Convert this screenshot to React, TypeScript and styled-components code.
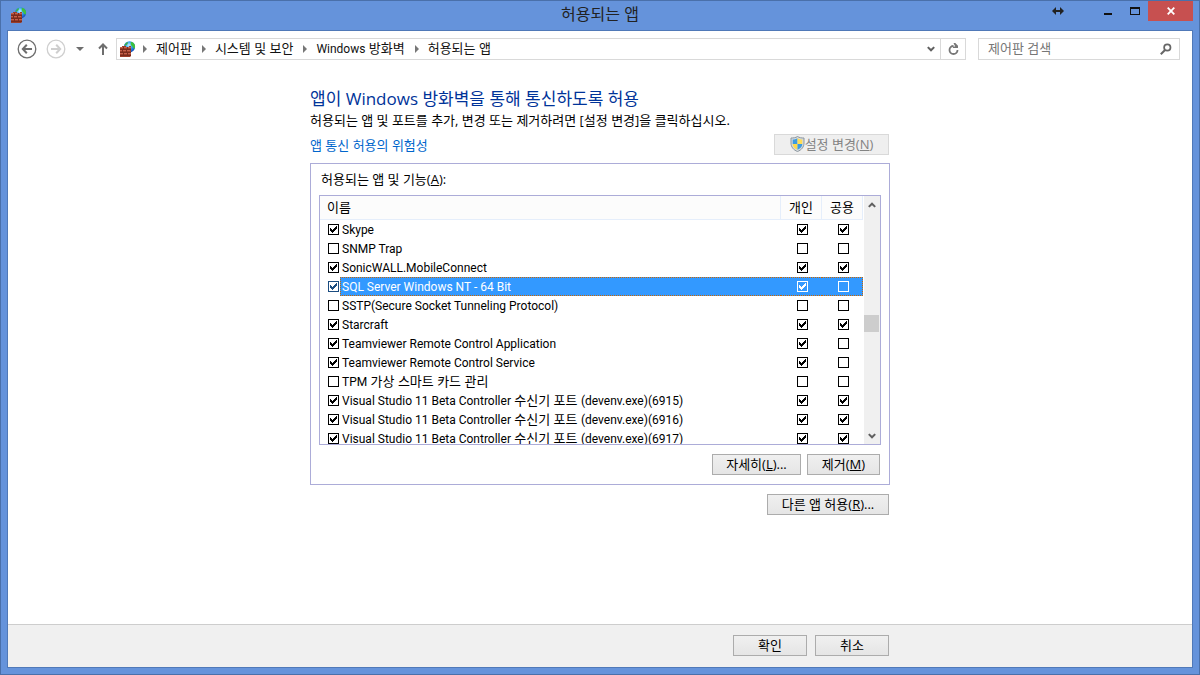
import React from "react";
import styled, { createGlobalStyle, css } from "styled-components";

const GlobalStyle = createGlobalStyle`
  *, *::before, *::after { box-sizing: border-box; }
  body {
    margin: 0;
    font-family: "Open Sans", "Noto Sans CJK KR", sans-serif;
    font-size: 13px;
    line-height: 18px;
    color: #000;
  }
  button, input { font: inherit; color: inherit; }
  svg { display: block; flex: none; }
`;

const Window = styled.div`
  display: flex;
  flex-direction: column;
  min-height: 100vh;
  padding: 0 6px 6px;
  background: #6593db;
  border: 1px solid #4a70aa;
`;

const TitleBar = styled.header`
  display: grid;
  grid-template-columns: 1fr auto 1fr;
  height: 29px;
`;

const TitleIcon = styled.div`
  padding: 6px 0 0 4px;
`;

const Title = styled.h1`
  margin: 0;
  font-size: 16px;
  line-height: 26px;
  font-weight: 400;
  color: #222;
`;

const Controls = styled.div`
  display: flex;
  justify-content: flex-end;
  align-items: flex-start;
`;

const ControlButton = styled.button<{ $wide?: boolean; $close?: boolean }>`
  display: flex;
  align-items: center;
  justify-content: center;
  width: ${(p) => (p.$close ? 45 : 27)}px;
  height: 20px;
  margin-right: ${(p) => (p.$wide ? 23 : 0)}px;
  padding: 0;
  border: 0;
  background: ${(p) => (p.$close ? "#c75050" : "transparent")};
`;

const Client = styled.div`
  flex: 1;
  display: flex;
  flex-direction: column;
  background: #fff;
  border: 1px solid #5079b8;
`;

const Toolbar = styled.nav`
  display: flex;
  align-items: center;
  padding: 7px 12px 0 9px;
`;

const NavButton = styled.button<{ $gap: number }>`
  display: flex;
  padding: 0;
  margin-right: ${(p) => p.$gap}px;
  border: 0;
  background: transparent;
`;

const AddressBar = styled.div`
  flex: 1;
  display: flex;
  align-items: stretch;
  height: 22px;
  margin-right: 12px;
  border: 1px solid #d9d9d9;
`;

const Crumbs = styled.ol`
  flex: 1;
  display: flex;
  align-items: center;
  margin: 0;
  padding: 0 0 0 3px;
  list-style: none;
`;

const Crumb = styled.li<{ $first: boolean }>`
  display: flex;
  align-items: center;
  svg { margin: 0 9px 0 ${(p) => (p.$first ? 7 : 10)}px; }
`;

const CrumbLink = styled.a`
  padding-bottom: 2px;
  color: #111;
  text-decoration: none;
`;

const BarButton = styled.button<{ $divided?: boolean }>`
  display: flex;
  align-items: center;
  justify-content: center;
  width: ${(p) => (p.$divided ? 25 : 18)}px;
  padding: 0;
  border: 0;
  border-left: ${(p) => (p.$divided ? "1px solid #d9d9d9" : "0")};
  background: transparent;
`;

const Search = styled.form`
  display: flex;
  align-items: center;
  width: 202px;
  height: 22px;
  padding: 0 7px 0 9px;
  border: 1px solid #d9d9d9;
`;

const SearchInput = styled.input`
  flex: 1;
  min-width: 0;
  height: 20px;
  padding: 0 0 2px;
  border: 0;
  outline: 0;
  background: transparent;
  &::placeholder { color: #767676; opacity: 1; }
`;

const Main = styled.main`
  flex: 1;
  width: 100%;
  max-width: 580px;
  margin: 0 auto;
  padding: 28px 0 24px;
`;

const Heading = styled.h2`
  margin: 0;
  font-size: 17px;
  line-height: 22px;
  font-weight: 400;
  color: #003399;
`;

const Description = styled.p`
  margin: 0 0 4px;
  line-height: 20px;
`;

const LinkRow = styled.div`
  display: flex;
  justify-content: space-between;
  align-items: center;
  padding-right: 1px;
  margin-bottom: 8px;
`;

const RiskLink = styled.a`
  color: #0066cc;
  text-decoration: none;
`;

const PushButton = styled.button<{ $width: number }>`
  display: flex;
  align-items: center;
  justify-content: center;
  width: ${(p) => p.$width}px;
  height: 21px;
  padding: 0 0 2px;
  border: 1px solid #acacac;
  background: linear-gradient(#f0f0f0, #e5e5e5);
  white-space: pre;
  &:disabled {
    border-color: #d9d9d9;
    background: #efefef;
    color: #838383;
  }
`;

const Group = styled.section`
  padding: 0 8px 9px;
  border: 1px solid #acacd8;
`;

const GroupLabel = styled.h3`
  margin: 0;
  padding: 6px 2px 7px;
  font-size: 13px;
  line-height: 18px;
  font-weight: 400;
`;

const ListBox = styled.div`
  display: flex;
  height: 250px;
  overflow: hidden;
  border: 1px solid #acacd8;
`;

const AppTable = styled.table`
  flex: 1;
  align-self: flex-start;
  table-layout: fixed;
  border-collapse: separate;
  border-spacing: 0;
`;

const HeadCell = styled.th<{ $center?: boolean }>`
  width: ${(p) => (p.$center ? "41px" : "auto")};
  height: 24px;
  padding: ${(p) => (p.$center ? "0 0 2px" : "0 0 2px 7px")};
  text-align: ${(p) => (p.$center ? "center" : "left")};
  font-weight: 400;
  background: #fcfcfc;
  border-right: 1px solid #e5eefb;
  border-bottom: 1px solid #e5eefb;
`;

const rowDots = "linear-gradient(90deg, #cc6600 50%, #3399ff 50%)";
const sideDots = "linear-gradient(#cc6600 50%, #3399ff 50%)";

const selection = (side?: "left" | "right") => css`
  background:
    ${side ? `${sideDots} ${side} top / 1px 2px repeat-y,` : ""}
    ${rowDots} left top / 2px 1px repeat-x,
    ${rowDots} left bottom / 2px 1px repeat-x,
    #3399ff;
`;

const NameCell = styled.td`
  padding: 0 0 0 8px;
`;

const NameRow = styled.div`
  display: flex;
  align-items: center;
  height: 19px;
`;

const NameText = styled.label<{ $selected?: boolean }>`
  flex: 1;
  height: 19px;
  margin-left: 1px;
  padding-left: 2px;
  line-height: 19px;
  white-space: nowrap;
  color: ${(p) => (p.$selected ? "#fff" : "#000")};
  ${(p) => p.$selected && selection("left")}
`;

const CheckCell = styled.td<{ $selected?: boolean; $last?: boolean }>`
  height: 19px;
  padding: 0 0 0 16px;
  ${(p) => p.$selected && selection(p.$last ? "right" : undefined)}
`;

const Latin = styled.span`
  font-family: Roboto, sans-serif;
  font-size: 12px;
`;

const CheckWrap = styled.span<{ $tone: string; $fill: string }>`
  position: relative;
  display: block;
  width: 11px;
  height: 11px;
  color: ${(p) => p.$tone};
  background: ${(p) => p.$fill};
  svg {
    position: absolute;
    inset: 0;
    pointer-events: none;
  }
`;

const CheckInput = styled.input`
  appearance: none;
  display: block;
  width: 11px;
  height: 11px;
  margin: 0;
  border: 1px solid currentColor;
`;

const ScrollBar = styled.div`
  display: flex;
  flex-direction: column;
  align-items: center;
  width: 17px;
  background: #f0f0f0;
  border-left: 1px solid #fff;
`;

const ScrollButton = styled.button`
  display: flex;
  align-items: center;
  justify-content: center;
  width: 16px;
  height: 17px;
  padding: 0;
  border: 0;
  background: transparent;
`;

const ScrollTrack = styled.div`
  flex: 1;
  align-self: stretch;
  padding: 102px 1px 0 0;
`;

const ScrollThumb = styled.div`
  height: 17px;
  background: #cdcdcd;
`;

const ButtonRow = styled.div<{ $top: number; $gap: number }>`
  display: flex;
  justify-content: flex-end;
  gap: ${(p) => p.$gap}px;
  margin-top: ${(p) => p.$top}px;
  padding-right: 1px;
`;

const Footer = styled.footer`
  background: #f0f0f0;
  border-top: 1px solid #cdcdcd;
`;

const FooterInner = styled.div`
  max-width: 580px;
  margin: 0 auto;
  padding: 10px 0 11px;
`;

function FirewallIcon({ id }: { id: string }) {
  return (
    <svg width="16" height="16" viewBox="0 0 16 16" aria-hidden="true">
      <defs>
        <radialGradient id={id} cx="45%" cy="35%" r="70%">
          <stop offset="0" stopColor="#c4f2ff" />
          <stop offset="0.4" stopColor="#3aa6f0" />
          <stop offset="1" stopColor="#0b3fb0" />
        </radialGradient>
      </defs>
      <circle cx="9.500" cy="5.800" r="5.600" fill={`url(#${id})`} />
      <path d="M10.500.8c2 0 3.800 1.400 4.300 3.200.4 1.200.3 2.400-.1 3.400-1.100.2-1.600-.7-2-1.700-.5-.9-1.700-1-1.900-2.200-.1-1 .4-1.700-.3-2.700Z" fill="#3fc23a" />
      <path d="M4.300 4.500c.5-1.700 1.700-3 3.500-3.600.5 1.100-.4 2.300-1.300 3.100-.6.600-1.400.8-2.200.5Z" fill="#3fae48" />
      <path d="M0 6h2V5h4v1h3V5h2v10l-1 1H0Z" fill="#9c3d29" />
      <path d="M0 6.500h3M4 6.500h3M8 6.500h3M0 9.500h2M3 9.500h3M7 9.500h3M0 12.500h3M4 12.500h3M8 12.500h3" stroke="#c4604a" />
      <path d="M0 8.500h11M0 11.500h11M0 14.500h11M3.500 6v2M7.500 6v2M2.500 9v2M6.500 9v2M3.500 12v2M7.500 12v2" stroke="#6a2417" strokeWidth=".7" />
    </svg>
  );
}

function CircleArrow({ color, flip }: { color: string; flip?: boolean }) {
  return (
    <svg width="20" height="20" viewBox="0 0 20 20" fill="none" stroke={color} aria-hidden="true">
      <circle cx="10" cy="10" r="8.800" strokeWidth="1.300" />
      <g transform={flip ? "matrix(-1 0 0 1 20 0)" : undefined} strokeWidth="2">
        <path d="M6 10h9" />
        <path d="M9.800 5.800 5.800 10l4 4.200" />
      </g>
    </svg>
  );
}

const CrumbArrow = () => (
  <svg width="4" height="8" viewBox="0 0 4 8" aria-hidden="true">
    <path d="M0 0 4 4 0 8Z" fill="#777" />
  </svg>
);

function Chevron({ up }: { up?: boolean }) {
  return (
    <svg width="8" height="6" viewBox="0 0 8 6" fill="none" stroke="#606060" strokeWidth="2" aria-hidden="true">
      <path d={up ? "M.8 4.900 4 1.700l3.200 3.200" : "M.8 1.100 4 4.300l3.200-3.200"} />
    </svg>
  );
}

function Shield() {
  return (
    <svg width="15" height="16" viewBox="0 0 15 16" aria-hidden="true">
      <path d="M7.500.5C9.500 1.800 11.500 2 14 2v5c0 4-2.500 7-6.500 8.500C3.500 14 1 11 1 7V2c2.500 0 4.500-.2 6.500-1.500Z" fill="#d5dade" stroke="#8d979f" />
      <path d="M7.500 2.300V8H2.700V3.500C4.500 3.500 6 3.200 7.500 2.300Z" fill="#3d9be0" />
      <path d="M7.500 2.300V8h4.800V3.500c-1.800 0-3.300-.3-4.800-1.200Z" fill="#ffdd55" />
      <path d="M7.500 13.800V8H2.700c.2 2.800 2 4.800 4.800 5.800Z" fill="#ffd94a" />
      <path d="M7.500 13.800V8h4.800c-.2 2.800-2 4.800-4.800 5.800Z" fill="#3d9be0" />
    </svg>
  );
}

// Sets runs of Latin letters and digits in their own face, one size below the Hangul.
function Mixed({ text }: { text: string }) {
  return (
    <>
      {text
        .split(/([\x21-\x7e]+(?: [\x21-\x7e]+)*)/)
        .map((run, i) => (i % 2 ? <Latin key={i}>{run}</Latin> : run))}
    </>
  );
}

type CheckProps = { id?: string; label?: string; checked: boolean; tone?: string; fill?: string };

function Check({ id, label, checked, tone = "#000", fill = "#fff" }: CheckProps) {
  return (
    <CheckWrap $tone={tone} $fill={fill}>
      <CheckInput type="checkbox" id={id} aria-label={label} defaultChecked={checked} />
      {checked && (
        <svg width="11" height="11" viewBox="0 0 11 11" shapeRendering="crispEdges" aria-hidden="true">
          <path d="M2 4h1v1h1v1h1V5h1V4h1V3h1V2h1v3H8v1H7v1H6v1H5v1H4V8H3V7H2Z" fill="currentColor" />
        </svg>
      )}
    </CheckWrap>
  );
}

type AppRow = { name: string; on: boolean; priv: boolean; pub: boolean; selected?: boolean };

const rows: AppRow[] = [
  { name: "Skype", on: true, priv: true, pub: true },
  { name: "SNMP Trap", on: false, priv: false, pub: false },
  { name: "SonicWALL.MobileConnect", on: true, priv: true, pub: true },
  { name: "SQL Server Windows NT - 64 Bit", on: true, priv: true, pub: false, selected: true },
  { name: "SSTP(Secure Socket Tunneling Protocol)", on: false, priv: false, pub: false },
  { name: "Starcraft", on: true, priv: true, pub: true },
  { name: "Teamviewer Remote Control Application", on: true, priv: true, pub: false },
  { name: "Teamviewer Remote Control Service", on: true, priv: true, pub: false },
  { name: "TPM 가상 스마트 카드 관리", on: false, priv: false, pub: false },
  { name: "Visual Studio 11 Beta Controller 수신기 포트 (devenv.exe)(6915)", on: true, priv: true, pub: true },
  { name: "Visual Studio 11 Beta Controller 수신기 포트 (devenv.exe)(6916)", on: true, priv: true, pub: true },
  { name: "Visual Studio 11 Beta Controller 수신기 포트 (devenv.exe)(6917)", on: true, priv: true, pub: true },
];

const crumbs = ["제어판", "시스템 및 보안", "Windows 방화벽", "허용되는 앱"];

export default function App() {
  return (
    <>
      <GlobalStyle />
      <Window>
        <TitleBar>
          <TitleIcon>
            <FirewallIcon id="globe-title" />
          </TitleIcon>
          <Title>허용되는 앱</Title>
          <Controls>
            <ControlButton $wide aria-label="크기 조정">
              <svg width="12" height="8" viewBox="0 0 12 8" aria-hidden="true">
                <path d="M0 4 4 0v3h4V0l4 4-4 4V5H4v3Z" fill="#222" />
              </svg>
            </ControlButton>
            <ControlButton aria-label="최소화">
              <svg width="8" height="8" viewBox="0 0 8 8" aria-hidden="true">
                <path d="M0 6h8v2H0Z" fill="#111" />
              </svg>
            </ControlButton>
            <ControlButton aria-label="최대화">
              <svg width="10" height="8" viewBox="0 0 10 8" aria-hidden="true">
                <path d="M0 0h10v8H0Zm1 2v5h8V2Z" fill="#111" fillRule="evenodd" />
              </svg>
            </ControlButton>
            <ControlButton $close aria-label="닫기">
              <svg width="8" height="8" viewBox="0 0 8 8" aria-hidden="true">
                <path d="m.7.700 6.600 6.600M7.300.700.7 7.300" stroke="#fff" strokeWidth="1.800" />
              </svg>
            </ControlButton>
          </Controls>
        </TitleBar>

        <Client>
          <Toolbar>
            <NavButton $gap={9} aria-label="뒤로">
              <CircleArrow color="#6e6e6e" />
            </NavButton>
            <NavButton $gap={10} aria-label="앞으로" disabled>
              <CircleArrow color="#cfcfcf" flip />
            </NavButton>
            <NavButton $gap={14} aria-label="최근 위치">
              <svg width="8" height="4" viewBox="0 0 8 4" aria-hidden="true">
                <path d="M0 0h8L4 4Z" fill="#6e6e6e" />
              </svg>
            </NavButton>
            <NavButton $gap={8} aria-label="위로">
              <svg width="10" height="12" viewBox="0 0 10 12" fill="none" stroke="#6e6e6e" strokeWidth="2" aria-hidden="true">
                <path d="M5 1.500V12M1 5.500l4-4 4 4" />
              </svg>
            </NavButton>
            <AddressBar>
              <Crumbs>
                <li>
                  <FirewallIcon id="globe-path" />
                </li>
                {crumbs.map((name, i) => (
                  <Crumb key={name} $first={i === 0}>
                    <CrumbArrow />
                    <CrumbLink href="#">
                      <Mixed text={name} />
                    </CrumbLink>
                  </Crumb>
                ))}
              </Crumbs>
              <BarButton aria-label="이전 위치">
                <Chevron />
              </BarButton>
              <BarButton $divided aria-label="새로 고침">
                <svg width="11" height="12" viewBox="0 0 11 12" fill="none" aria-hidden="true">
                  <path d="M5.500 3A4 4 0 1 0 9.500 7" stroke="#777" strokeWidth="1.800" />
                  <path d="M5.500 0h1.800L10 2.800V5H5V3.500h2.200Z" fill="#777" />
                </svg>
              </BarButton>
            </AddressBar>
            <Search role="search">
              <SearchInput aria-label="제어판 검색" placeholder="제어판 검색" />
              <svg width="12" height="12" viewBox="0 0 12 12" fill="none" stroke="#666" aria-hidden="true">
                <circle cx="7.300" cy="4.500" r="3.200" strokeWidth="1.700" />
                <path d="M5 7 .8 11.200" strokeWidth="2" />
              </svg>
            </Search>
          </Toolbar>

          <Main>
            <Heading>앱이 Windows 방화벽을 통해 통신하도록 허용</Heading>
            <Description>허용되는 앱 및 포트를 추가, 변경 또는 제거하려면 [설정 변경]을 클릭하십시오.</Description>
            <LinkRow>
              <RiskLink href="#">앱 통신 허용의 위험성</RiskLink>
              <PushButton $width={115} disabled>
                <Shield />
                <span>
                  설정 변경(<u>N</u>)
                </span>
              </PushButton>
            </LinkRow>

            <Group>
              <GroupLabel>
                허용되는 앱 및 기능(<u>A</u>):
              </GroupLabel>
              <ListBox>
                <AppTable>
                  <thead>
                    <tr>
                      <HeadCell scope="col">이름</HeadCell>
                      <HeadCell scope="col" $center>개인</HeadCell>
                      <HeadCell scope="col" $center>공용</HeadCell>
                    </tr>
                  </thead>
                  <tbody>
                    {rows.map((row, i) => {
                      const tone = row.selected ? "#fff" : "#000";
                      const fill = row.selected ? "#3399ff" : "#fff";
                      return (
                        <tr key={row.name}>
                          <NameCell>
                            <NameRow>
                              <Check id={`app-${i}`} checked={row.on} tone={row.selected ? "#1a4c80" : "#000"} />
                              <NameText htmlFor={`app-${i}`} $selected={row.selected}>
                                <Mixed text={row.name} />
                              </NameText>
                            </NameRow>
                          </NameCell>
                          <CheckCell $selected={row.selected}>
                            <Check label={`${row.name} 개인`} checked={row.priv} tone={tone} fill={fill} />
                          </CheckCell>
                          <CheckCell $selected={row.selected} $last>
                            <Check label={`${row.name} 공용`} checked={row.pub} tone={tone} fill={fill} />
                          </CheckCell>
                        </tr>
                      );
                    })}
                  </tbody>
                </AppTable>
                <ScrollBar>
                  <ScrollButton aria-label="위로 스크롤">
                    <Chevron up />
                  </ScrollButton>
                  <ScrollTrack>
                    <ScrollThumb />
                  </ScrollTrack>
                  <ScrollButton aria-label="아래로 스크롤">
                    <Chevron />
                  </ScrollButton>
                </ScrollBar>
              </ListBox>
              <ButtonRow $top={9} $gap={6}>
                <PushButton $width={89}>
                  <span>
                    자세히(<u>L</u>)...
                  </span>
                </PushButton>
                <PushButton $width={73}>
                  <span>
                    제거(<u>M</u>)
                  </span>
                </PushButton>
              </ButtonRow>
            </Group>
            <ButtonRow $top={9} $gap={8}>
              <PushButton $width={122}>
                <span>
                  다른 앱 허용(<u>R</u>)...
                </span>
              </PushButton>
            </ButtonRow>
          </Main>

          <Footer>
            <FooterInner>
              <ButtonRow $top={0} $gap={8}>
                <PushButton $width={74}>확인</PushButton>
                <PushButton $width={74}>취소</PushButton>
              </ButtonRow>
            </FooterInner>
          </Footer>
        </Client>
      </Window>
    </>
  );
}
